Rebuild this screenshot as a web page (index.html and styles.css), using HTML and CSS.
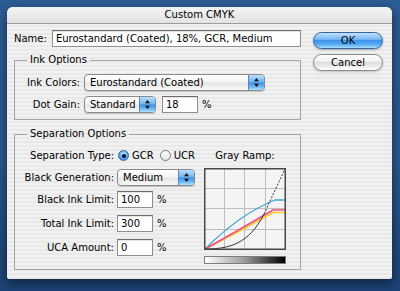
FILE: index.html
```html
<!DOCTYPE html>
<html>
<head>
<meta charset="utf-8">
<title>Custom CMYK</title>
<link rel="stylesheet" href="styles.css">
</head>
<body>
<div class="window">
  <div class="titlebar">Custom CMYK</div>
  <div class="body">
    <div class="main">
      <div class="name-row">
        <span class="lbl">Name:</span>
        <div class="field name-field">Eurostandard (Coated), 18%, GCR, Medium</div>
      </div>

      <fieldset class="group ink">
        <legend>Ink Options</legend>
        <div class="row">
          <span class="lbl ink-lbl">Ink Colors:</span>
          <div class="popup w-inkcolors">
            <span class="popup-text">Eurostandard (Coated)</span>
            <span class="arrows"><svg width="7" height="11" viewBox="0 0 7 11"><path d="M3.5 1 L6 4.2 L1 4.2 Z M3.5 10 L6 6.8 L1 6.8 Z" fill="#111"/></svg></span>
          </div>
        </div>
        <div class="row">
          <span class="lbl ink-lbl">Dot Gain:</span>
          <div class="popup w-dot">
            <span class="popup-text">Standard</span>
            <span class="arrows"><svg width="7" height="11" viewBox="0 0 7 11"><path d="M3.5 1 L6 4.2 L1 4.2 Z M3.5 10 L6 6.8 L1 6.8 Z" fill="#111"/></svg></span>
          </div>
          <div class="field w-dotfield">18</div>
          <span class="pct">%</span>
        </div>
      </fieldset>

      <fieldset class="group sep">
        <legend>Separation Options</legend>
        <div class="sep-grid">
          <div class="sep-form">
            <div class="row">
              <span class="lbl sep-lbl">Separation Type:</span>
              <span class="radio on"></span><span class="radio-text">GCR</span>
              <span class="radio off"></span><span class="radio-text">UCR</span>
            </div>
            <div class="row r-gen">
              <span class="lbl sep-lbl">Black Generation:</span>
              <div class="popup w-gen">
                <span class="popup-text">Medium</span>
                <span class="arrows"><svg width="7" height="11" viewBox="0 0 7 11"><path d="M3.5 1 L6 4.2 L1 4.2 Z M3.5 10 L6 6.8 L1 6.8 Z" fill="#111"/></svg></span>
              </div>
            </div>
            <div class="row r-bil">
              <span class="lbl sep-lbl">Black Ink Limit:</span>
              <div class="field w-num">100</div>
              <span class="pct">%</span>
            </div>
            <div class="row r-til">
              <span class="lbl sep-lbl">Total Ink Limit:</span>
              <div class="field w-num">300</div>
              <span class="pct">%</span>
            </div>
            <div class="row r-uca">
              <span class="lbl sep-lbl">UCA Amount:</span>
              <div class="field w-num">0</div>
              <span class="pct">%</span>
            </div>
          </div>
          <div class="ramp">
            <div class="ramp-label">Gray Ramp:</div>
            <svg class="graph" width="82" height="82" viewBox="0 0 82 82">
              <rect x="0" y="0" width="82" height="82" fill="#f4f4f4"/>
              <g stroke="#bdbdbd" stroke-width="1">
                <line x1="20.5" y1="1" x2="20.5" y2="81"/>
                <line x1="40.5" y1="1" x2="40.5" y2="81"/>
                <line x1="61.5" y1="1" x2="61.5" y2="81"/>
                <line x1="1" y1="20.5" x2="81" y2="20.5"/>
                <line x1="1" y1="40.5" x2="81" y2="40.5"/>
                <line x1="1" y1="61.5" x2="81" y2="61.5"/>
              </g>
              <path d="M1 81 Q36 46 71 32 L81 32" fill="none" stroke="#3aa6d6" stroke-width="1.3"/>
              <path d="M1 81 Q35 64 69 44.5 L81 44.5" fill="none" stroke="#f2cf1e" stroke-width="1.5"/>
              <path d="M1 81 Q35 62 69 42 L81 42" fill="none" stroke="#ef4f8a" stroke-width="1.5"/>
              <path d="M1 81 C25 81 45 76 60 46" fill="none" stroke="#333" stroke-width="1"/>
              <path d="M60 46 L81 1" fill="none" stroke="#333" stroke-width="1" stroke-dasharray="2 1.5"/>
              <rect x="0.75" y="0.75" width="80.5" height="80.5" fill="none" stroke="#474747" stroke-width="1.5"/>
            </svg>
            <div class="gradbar"></div>
          </div>
        </div>
      </fieldset>
    </div>

    <div class="buttons">
      <div class="btn ok">OK</div>
      <div class="btn cancel">Cancel</div>
    </div>
  </div>
</div>
</body>
</html>
```

FILE: styles.css
```css
* { box-sizing: border-box; }
html, body { margin: 0; }
body {
  width: 400px;
  height: 291px;
  overflow: hidden;
  padding: 7px 0 0 7px;
  background: linear-gradient(180deg, #2c5d94 0%, #2a5a8f 55%, #1d4377 100%);
  font-family: "DejaVu Sans", Verdana, sans-serif;
  font-size: 10px;
  color: #000;
}
.window {
  width: 385px;
  height: 272px;
  border-radius: 6px 6px 2px 2px;
  background: repeating-linear-gradient(180deg, #f1f1f1 0 2px, #e9e9e9 2px 4px);
  box-shadow: 0 4px 12px rgba(0, 0, 0, 0.55);
  overflow: hidden;
}
.titlebar {
  height: 17px;
  line-height: 16px;
  text-align: center;
  border-bottom: 1px solid #9c9c9c;
  background: linear-gradient(180deg, #f3f3f3, #e3e3e3);
}
.body {
  display: flex;
  gap: 12px;
  padding: 6px 9px 0 7px;
}
.main { width: 287px; }

.name-row {
  display: flex;
  align-items: center;
  gap: 5px;
}
.field {
  height: 17px;
  line-height: 15px;
  padding-left: 3px;
  background: #fff;
  border: 1px solid #8f8f8f;
  border-top-color: #6a6a6a;
  box-shadow: inset 0 1px 1px rgba(0, 0, 0, 0.12);
  white-space: nowrap;
}
.name-field { width: 251px; }

.group {
  margin: 0;
  padding: 0;
  border: 1px solid #a4a4a4;
  min-width: 0;
}
.group legend {
  padding: 0 3px;
  margin-left: 12px;
  line-height: 12px;
}
.ink { margin-top: 7px; padding: 8px 0 6px 0; }
.sep { margin-top: 8px; padding: 7px 0 5px 0; }

.row {
  display: flex;
  align-items: center;
  height: 17px;
}
.row + .row { margin-top: 5px; }
.lbl { white-space: nowrap; }
.ink-lbl { width: 65px; text-align: right; margin-right: 4px; }
.sep-lbl { width: 99px; text-align: right; margin-right: 3px; }

.popup {
  display: flex;
  align-items: stretch;
  height: 17px;
  border: 1px solid #8a8a8a;
  border-radius: 4px;
  background: linear-gradient(180deg, #ffffff 0%, #f4f4f4 45%, #e6e6e6 55%, #f7f7f7 100%);
  box-shadow: 0 1px 1px rgba(0, 0, 0, 0.18);
  overflow: hidden;
}
.popup-text {
  flex: 1;
  padding-left: 5px;
  line-height: 15px;
  white-space: nowrap;
}
.arrows {
  width: 16px;
  display: flex;
  align-items: center;
  justify-content: center;
  border-left: 1px solid #5c86b6;
  background: linear-gradient(180deg, #b9defd 0%, #74b6f3 45%, #3f91e6 52%, #6fb8f6 80%, #b4e4ff 100%);
}
.w-inkcolors { width: 181px; }
.w-dot { width: 72px; }
.w-dotfield { width: 36px; margin-left: 6px; }
.w-gen { width: 78px; }
.w-num { width: 36px; }
.pct { margin-left: 4px; }

.r-gen { margin-top: 5px; }
.row.r-bil { margin-top: 5px; }
.row.r-til { margin-top: 7px; }
.row.r-uca { margin-top: 7px; }

.radio {
  width: 11px;
  height: 11px;
  border-radius: 50%;
  display: flex;
  align-items: center;
  justify-content: center;
}
.radio.on {
  margin-left: 1px;
  border: 1px solid #35689f;
  background: radial-gradient(circle at 50% 35%, #c6e6ff 0%, #5aa7ee 55%, #2f7fd6 100%);
}
.radio.on::after {
  content: "";
  width: 4px;
  height: 4px;
  border-radius: 50%;
  background: #111;
}
.radio.off {
  margin-left: 6px;
  border: 1px solid #7a7a7a;
  background: linear-gradient(180deg, #ffffff, #e4e4e4);
}
.radio-text { margin-left: 3px; }

.sep-grid {
  display: grid;
  grid-template-columns: 185px 82px;
  column-gap: 4px;
}
.ramp {
  display: flex;
  flex-direction: column;
  align-items: center;
}
.ramp-label {
  height: 17px;
  line-height: 17px;
  white-space: nowrap;
}
.graph { display: block; margin-top: 4px; }
.gradbar {
  width: 82px;
  height: 8px;
  margin-top: 6px;
  border: 1px solid #7c7c7c;
  background: linear-gradient(90deg, #ffffff 0%, #9a9a9a 50%, #000000 100%);
}

.buttons {
  width: 70px;
  display: flex;
  flex-direction: column;
  gap: 5px;
  padding-top: 2px;
}
.btn {
  height: 17px;
  line-height: 15px;
  text-align: center;
  border-radius: 9px;
}
.ok {
  border: 1px solid #34649f;
  background: linear-gradient(180deg, #c0e1fd 0%, #78b9f4 42%, #3f92e8 50%, #5aaef5 78%, #a8e0ff 100%);
  box-shadow: 0 1px 2px rgba(0, 0, 0, 0.3);
}
.cancel {
  border: 1px solid #8a8a8a;
  background: linear-gradient(180deg, #ffffff 0%, #f3f3f3 42%, #dedede 50%, #eeeeee 78%, #ffffff 100%);
  box-shadow: 0 1px 2px rgba(0, 0, 0, 0.2);
}
```
